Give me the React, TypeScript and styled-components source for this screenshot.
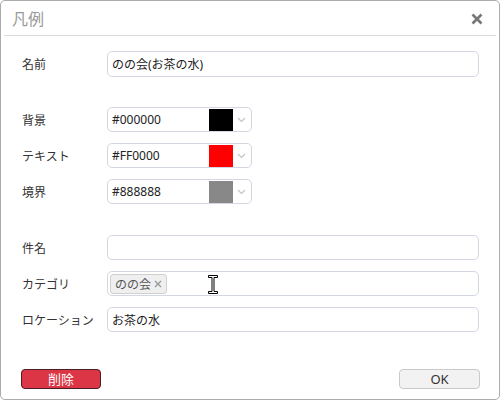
import React from "react";
import styled, { createGlobalStyle } from "styled-components";

const Global = createGlobalStyle`
  html, body { margin: 0; padding: 0; background: #fff; }
  body { font-family: "Noto Sans", "Noto Sans CJK JP", sans-serif; }
  * { box-sizing: border-box; }
`;

const Dialog = styled.div`
  position: relative;
  width: 500px;
  height: 400px;
  border: 1px solid #ababab;
  border-radius: 5px;
  background: #fff;
  display: flex;
  flex-direction: column;
`;

const Header = styled.div`
  height: 35px;
  margin: 0 3px;
  padding: 0 13px 0 8px;
  border-bottom: 1px solid #dcdcdc;
  display: flex;
  align-items: center;
  justify-content: space-between;
`;

const Title = styled.div`
  font-size: 16px;
  color: #999;
  line-height: 1;
  margin-top: 1px;
`;

const CloseBtn = styled.div`
  width: 12px;
  height: 12px;
  display: flex;
  margin-top: 1px;
`;

const Body = styled.div`
  padding: 15px 20px 0 20px;
  display: flex;
  flex-direction: column;
`;

const Section = styled.div<{ $top: number }>`
  margin-top: ${(p) => p.$top}px;
  display: flex;
  flex-direction: column;
  gap: 11px;
`;

const Row = styled.div`
  display: grid;
  grid-template-columns: 86px 1fr;
  align-items: center;
`;

const Label = styled.div`
  font-size: 12px;
  color: #333;
  padding-left: 1px;
  white-space: nowrap;
`;

const TextBox = styled.div<{ $h: number; $w?: number }>`
  position: relative;
  height: ${(p) => p.$h}px;
  width: ${(p) => (p.$w ? `${p.$w}px` : "100%")};
  border: 1px solid #d3d7e1;
  border-radius: 5px;
  display: flex;
  align-items: center;
  padding: 0 4px;
  font-size: 12px;
  color: #222;
`;

const ColorText = styled.span`
  flex: 1;
`;

const Swatch = styled.span<{ $c: string }>`
  width: 24px;
  height: 22px;
  background: ${(p) => p.$c};
`;

const ChevronBox = styled.span`
  width: 17px;
  display: flex;
  justify-content: center;
  margin-right: -3px;
`;

const Tag = styled.span`
  height: 20px;
  margin-left: -2px;
  padding: 0 4px 0 4px;
  background: #efefef;
  border: 1px solid #d0d0d0;
  border-radius: 3px;
  display: inline-flex;
  align-items: center;
  gap: 3px;
  font-size: 12px;
  color: #555;
`;

const TagX = styled.span`
  display: flex;
`;

const Cursor = styled.svg`
  position: absolute;
  left: 99px;
  top: 3px;
`;

const Footer = styled.div`
  margin-top: 37px;
  padding: 0 19px 0 20px;
  display: flex;
  justify-content: space-between;
`;

const Button = styled.button<{ $danger?: boolean }>`
  width: ${(p) => (p.$danger ? 80 : 81)}px;
  height: 20px;
  padding: 0;
  border-radius: 4px;
  border: 1px solid ${(p) => (p.$danger ? "#4b1e26" : "#c9c9c9")};
  background: ${(p) => (p.$danger ? "#dc3545" : "#f2f2f2")};
  color: ${(p) => (p.$danger ? "#fff" : "#333")};
  font-family: "Noto Sans", "Noto Sans CJK JP", sans-serif;
  font-size: 13px;
  line-height: 1;
  display: flex;
  align-items: center;
  justify-content: center;
`;

const Chevron = () => (
  <svg width="9" height="6" viewBox="0 0 9 6">
    <path d="M1 1 L4.5 4.5 L8 1" fill="none" stroke="#c4c4c4" strokeWidth="1.2" />
  </svg>
);

const ColorRow = ({ label, value }: { label: string; value: string }) => (
  <Row>
    <Label>{label}</Label>
    <TextBox $h={25} $w={145}>
      <ColorText>{value}</ColorText>
      <Swatch $c={value} />
      <ChevronBox>
        <Chevron />
      </ChevronBox>
    </TextBox>
  </Row>
);

export default function App() {
  return (
    <>
      <Global />
      <Dialog>
        <Header>
          <Title>凡例</Title>
          <CloseBtn>
            <svg width="12" height="12" viewBox="0 0 12 12">
              <path d="M1.5 1.5 L10.5 10.5 M10.5 1.5 L1.5 10.5" stroke="#777" strokeWidth="2.6" strokeLinecap="butt" />
            </svg>
          </CloseBtn>
        </Header>
        <Body>
          <Section $top={0}>
            <Row>
              <Label>名前</Label>
              <TextBox $h={26}>のの会(お茶の水)</TextBox>
            </Row>
          </Section>
          <Section $top={30}>
            <ColorRow label="背景" value="#000000" />
            <ColorRow label="テキスト" value="#FF0000" />
            <ColorRow label="境界" value="#888888" />
          </Section>
          <Section $top={31}>
            <Row>
              <Label>件名</Label>
              <TextBox $h={25} />
            </Row>
            <Row>
              <Label>カテゴリ</Label>
              <TextBox $h={25}>
                <Tag>
                  のの会
                  <TagX>
                    <svg width="8" height="8" viewBox="0 0 8 8">
                      <path d="M1 1 L7 7 M7 1 L1 7" stroke="#999" strokeWidth="1.4" />
                    </svg>
                  </TagX>
                </Tag>
                <Cursor width="12" height="19" viewBox="0 0 12 19">
                  <path
                    d="M1.5 0.5 H10.5 V2.5 H7 V16.5 H10.5 V18.5 H1.5 V16.5 H5 V2.5 H1.5 Z"
                    fill="#fff"
                    stroke="#000"
                    strokeWidth="1"
                  />
                </Cursor>
              </TextBox>
            </Row>
            <Row>
              <Label>ロケーション</Label>
              <TextBox $h={25}>お茶の水</TextBox>
            </Row>
          </Section>
        </Body>
        <Footer>
          <Button $danger>削除</Button>
          <Button>OK</Button>
        </Footer>
      </Dialog>
    </>
  );
}
